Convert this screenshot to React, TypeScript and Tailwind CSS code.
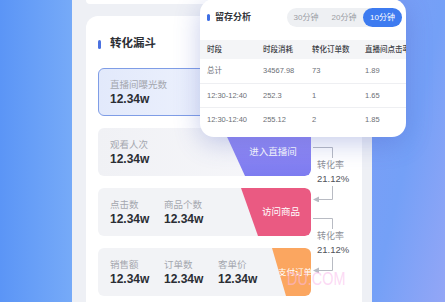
const cols = ['w-[56px]', 'w-[49px]', 'w-[53px]', 'w-[60px]'];

const tableHead = ['时段', '时段消耗', '转化订单数', '直播间点击率'];
const tableRows = [
  ['总计', '34567.98', '73', '1.89'],
  ['12:30-12:40', '252.3', '1', '1.65'],
  ['12:30-12:40', '255.12', '2', '1.85'],
];

function Stat({ label, value }: { label: string; value: string }) {
  return (
    <div className="w-[54px] shrink-0 whitespace-nowrap">
      <div className="text-[9.5px] leading-[13px] text-[#a4a7ae]">{label}</div>
      <div className="text-[12px] font-bold leading-[16px] text-[#2a2d33]">{value}</div>
    </div>
  );
}

function Connector() {
  return (
    <div className="flex flex-col">
      <svg width="26" height="12" className="block">
        <path d="M2 1.5 H21.5 V12" fill="none" stroke="#b8bbc3" strokeWidth="1" />
      </svg>
      <div className="pl-[6px] whitespace-nowrap">
        <div className="text-[9px] leading-[14px] text-[#8e9198]">转化率</div>
        <div className="text-[9.5px] font-medium leading-[14px] text-[#4f535a]">21.12%</div>
      </div>
      <svg width="26" height="16" className="block">
        <path d="M21.5 0 V13.5 H7" fill="none" stroke="#b8bbc3" strokeWidth="1" />
        <polygon points="2,13.5 8,10.5 8,16.5" fill="#b8bbc3" />
      </svg>
    </div>
  );
}

export default function App() {
  return (
    <div className="relative flex h-[302px] w-[445px] overflow-hidden font-['Liberation_Sans','Noto_Sans_CJK_SC',sans-serif]">
      <div className="w-[72px] bg-gradient-to-r from-[#5b95f6] to-[#76aaf8]" />

      <div className="flex w-[300px] flex-col bg-[#eef0f5] pl-[14px] pr-[10px]">
        <div className="h-[4px] rounded-b-lg bg-white" />
        <div className="mt-[12px] flex-1 rounded-t-xl bg-white px-[12px]">
          <div className="mb-[16px] mt-[20px] flex h-[16px] items-center gap-[9px]">
            <span className="h-[9px] w-[3px] rounded-full bg-[#4b72e0]" />
            <span className="text-[11.5px] font-bold text-[#2c2f35]">转化漏斗</span>
          </div>

          <div className="flex">
            <div className="flex w-[213px] flex-col gap-[12px]">
              <div className="flex h-[48px] flex-col justify-center rounded-md border border-[#7f9de6] bg-gradient-to-r from-[#e2e9fb] to-[#f7f9fe] pl-[11px]">
                <Stat label="直播间曝光数" value="12.34w" />
              </div>

              <div className="flex h-[48px] overflow-hidden rounded-md bg-gradient-to-r from-[#f0f1f5] to-[#f8f8fb]">
                <div className="flex flex-1 items-center pl-[12px]">
                  <Stat label="观看人次" value="12.34w" />
                </div>
                <div className="flex h-full w-[88px] items-center justify-center whitespace-nowrap rounded-r-md bg-gradient-to-b from-[#9a8ef6] to-[#7d7cf0] pl-[12px] text-[9.5px] text-white [clip-path:polygon(0_0,100%_0,100%_100%,22px_100%)]">
                  进入直播间
                </div>
              </div>

              <div className="flex h-[48px] overflow-hidden rounded-md bg-[#f2f3f6]">
                <div className="flex flex-1 items-center pl-[12px]">
                  <Stat label="点击数" value="12.34w" />
                  <Stat label="商品个数" value="12.34w" />
                </div>
                <div className="flex h-full w-[70px] items-center justify-center whitespace-nowrap rounded-r-md bg-[#ea5a82] pl-[10px] text-[9.5px] text-white [clip-path:polygon(0_0,100%_0,100%_100%,17px_100%)]">
                  访问商品
                </div>
              </div>

              <div className="flex h-[48px] overflow-hidden rounded-md bg-[#f2f3f6]">
                <div className="flex flex-1 items-center pl-[12px]">
                  <Stat label="销售额" value="12.34w" />
                  <Stat label="订单数" value="12.34w" />
                  <Stat label="客单价" value="12.34w" />
                </div>
                <div className="flex h-full w-[51px] items-center justify-center whitespace-nowrap rounded-r-md bg-[#fba660] pl-[6px] text-[8.5px] text-white [clip-path:polygon(0_0,100%_0,100%_100%,14px_100%)]">
                  支付订单
                </div>
              </div>
            </div>

            <div className="flex flex-1 flex-col pt-[78px]">
              <Connector />
              <div className="mt-[15px]">
                <Connector />
              </div>
            </div>
          </div>
        </div>
      </div>

      <div className="flex-1 bg-gradient-to-br from-[#7c9ef6] via-[#74a0f7] to-[#93a6f6]" />

      <div className="absolute left-[200px] top-[-1px] z-10 h-[138px] w-[206px] overflow-hidden rounded-[14px] bg-white shadow-[0_6px_26px_rgba(70,90,190,0.3)]">
        <div className="flex h-[41px] items-center justify-between pb-[4px] pl-[7px] pr-[4px]">
          <div className="flex items-center gap-[5px]">
            <span className="h-[7px] w-[3px] rounded-full bg-[#3e6fe4]" />
            <span className="text-[9px] font-bold text-[#33363b]">留存分析</span>
          </div>
          <div className="flex h-[19px] rounded-full bg-[#eef0f3] text-[8px]">
            <div className="flex w-[38px] items-center justify-center text-[#9a9da4]">30分钟</div>
            <div className="flex w-[38px] items-center justify-center text-[#9a9da4]">20分钟</div>
            <div className="flex w-[39px] items-center justify-center rounded-full bg-[#3d7bf0] text-white">10分钟</div>
          </div>
        </div>

        <div className="flex h-[19px] items-center whitespace-nowrap bg-[#f4f5f7] pl-[7px] text-[7.5px] font-medium text-[#3d4046]">
          {tableHead.map((h, i) => (
            <div key={i} className={`${cols[i]} shrink-0`}>{h}</div>
          ))}
        </div>
        {tableRows.map((r, ri) => (
          <div
            key={ri}
            className={`flex h-[24px] items-center whitespace-nowrap pl-[7px] text-[7.5px] text-[#6c6f76] ${ri > 0 ? 'border-t border-[#eeeff2]' : ''}`}
          >
            {r.map((c, i) => (
              <div key={i} className={`${cols[i]} shrink-0`}>{c}</div>
            ))}
          </div>
        ))}
      </div>

      <div className="pointer-events-none absolute left-[287px] top-[270px] origin-left scale-x-[0.8] text-[18px] leading-none text-[rgba(250,185,235,0.55)]">
        DU.COM
      </div>
    </div>
  );
}
